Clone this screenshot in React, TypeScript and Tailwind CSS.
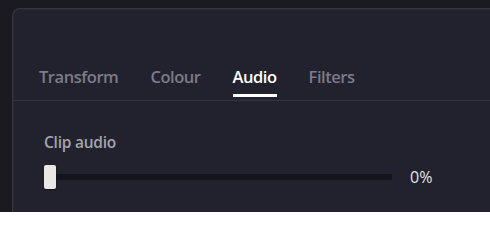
const tabs = ["Transform", "Colour", "Audio", "Filters"];

export default function App() {
    const active = "Audio";

    return (
        <div
            className="w-[490px] h-[212px] bg-[#1a1a20] pt-[8px] pl-[12px] flex overflow-hidden"
            style={{ fontFamily: '"Open Sans", "Noto Sans", sans-serif' }}
        >
            <div className="flex-1 flex flex-col rounded-tl-[8px] border-t border-l border-[#363642] bg-[#22222e] shadow-[inset_1px_1px_0_#2a2a36]">
                {/* tab bar */}
                <div className="flex gap-[32px] pl-[26px] pt-[56px] border-b border-[#34343f]">
                    {tabs.map((tab) => (
                        <div key={tab} className="flex flex-col pb-[3px]">
                            <span
                                className={`text-[16.5px] leading-[24px] font-semibold tracking-[-0.45px] ${
                                    tab === active ? "text-white" : "text-[#7b7b8a]"
                                }`}
                            >
                                {tab}
                            </span>
                            <div
                                className={`mt-[5px] h-[3px] ${
                                    tab === active ? "bg-white" : "bg-transparent"
                                }`}
                            />
                        </div>
                    ))}
                </div>

                {/* audio panel */}
                <div className="flex flex-col pl-[31px] pt-[31px]">
                    <span className="text-[15.5px] leading-[20px] font-semibold tracking-[-0.25px] text-[#a4a4b0]">
                        Clip audio
                    </span>
                    <div className="flex items-center mt-[13px]">
                        <div className="w-[12px] h-[24px] rounded-[2px] bg-[#ebe7e2] shadow-[0_1px_2px_rgba(0,0,0,0.5)]" />
                        <div className="w-[336px] h-[6px] bg-[#14141b]" />
                        <span className="ml-[18px] text-[16px] leading-[20px] text-[#e4e4ec]">
                            0%
                        </span>
                    </div>
                </div>
            </div>
        </div>
    );
}
